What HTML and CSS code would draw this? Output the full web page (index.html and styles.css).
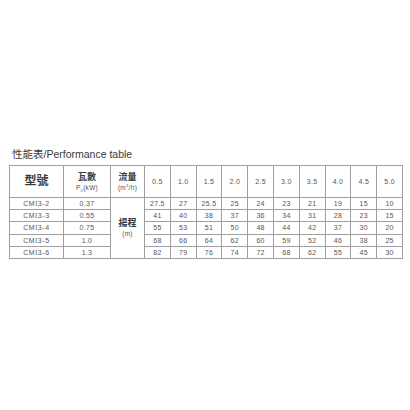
FILE: index.html
```html
<!DOCTYPE html>
<html lang="zh-Hant">
<head>
<meta charset="utf-8">
<title>Performance table</title>
<link rel="stylesheet" href="styles.css">
</head>
<body>
<main class="page">
  <h2 class="title">性能表/Performance table</h2>
  <table class="perf">
    <colgroup>
      <col class="c-model"><col class="c-power"><col class="c-head">
      <col class="c-q"><col class="c-q"><col class="c-q"><col class="c-q"><col class="c-q">
      <col class="c-q"><col class="c-q"><col class="c-q"><col class="c-q"><col class="c-q">
    </colgroup>
    <thead>
      <tr class="hrow">
        <th class="big">型號</th>
        <th><span class="zh">瓦數</span><span class="unit">P<sub>2</sub>(kW)</span></th>
        <th><span class="zh">流量</span><span class="unit">(m<sup>3</sup>/h)</span></th>
        <td>0.5</td><td>1.0</td><td>1.5</td><td>2.0</td><td>2.5</td>
        <td>3.0</td><td>3.5</td><td>4.0</td><td>4.5</td><td>5.0</td>
      </tr>
    </thead>
    <tbody>
      <tr>
        <td class="model">CMI3-2</td><td>0.37</td>
        <th rowspan="5"><span class="zh">揚程</span><span class="unit">(m)</span></th>
        <td>27.5</td><td>27</td><td>25.5</td><td>25</td><td>24</td><td>23</td><td>21</td><td>19</td><td>15</td><td>10</td>
      </tr>
      <tr>
        <td class="model">CMI3-3</td><td>0.55</td>
        <td>41</td><td>40</td><td>38</td><td>37</td><td>36</td><td>34</td><td>31</td><td>28</td><td>23</td><td>15</td>
      </tr>
      <tr>
        <td class="model">CMI3-4</td><td>0.75</td>
        <td>55</td><td>53</td><td>51</td><td>50</td><td>48</td><td>44</td><td>42</td><td>37</td><td>30</td><td>20</td>
      </tr>
      <tr>
        <td class="model">CMI3-5</td><td>1.0</td>
        <td>68</td><td>66</td><td>64</td><td>62</td><td>60</td><td>59</td><td>52</td><td>46</td><td>38</td><td>25</td>
      </tr>
      <tr>
        <td class="model">CMI3-6</td><td>1.3</td>
        <td>82</td><td>79</td><td>76</td><td>74</td><td>72</td><td>68</td><td>62</td><td>55</td><td>45</td><td>30</td>
      </tr>
    </tbody>
  </table>
</main>
</body>
</html>
```
FILE: styles.css
```css
html, body {
  margin: 0;
  padding: 0;
  background: #ffffff;
}
body {
  font-family: "Liberation Sans", "Noto Sans CJK TC", sans-serif;
  color: #444;
}
.page {
  padding: 147px 8px 0 9px;
}
.title {
  margin: 0 0 4px 3px;
  font-size: 10.5px;
  line-height: 14px;
  font-weight: normal;
  color: #3a3a3a;
}
.perf {
  width: 393px;
  table-layout: fixed;
  border-collapse: collapse;
  font-size: 7px;
  letter-spacing: 0.3px;
}
.c-model { width: 54px; }
.c-power { width: 47px; }
.c-head { width: 34px; }
.c-q { width: 25.8px; }
.perf th, .perf td {
  border: 1px solid #a0a0a0;
  padding: 0;
  text-align: center;
  vertical-align: middle;
  font-weight: normal;
  color: #555;
  line-height: 9px;
}
.perf tbody tr { height: 12.2px; }
.perf .hrow { height: 32px; }
.perf .big {
  font-size: 12px;
  font-weight: bold;
  color: #3a3a3a;
  letter-spacing: 0;
}
.zh {
  display: block;
  font-size: 9px;
  line-height: 12px;
  font-weight: bold;
  color: #3a3a3a;
  letter-spacing: 0;
}
.unit {
  display: block;
  font-size: 6.5px;
  line-height: 9px;
}
.unit sub, .unit sup {
  font-size: 4px;
  line-height: 0;
}
.model {
  letter-spacing: 0.6px;
}
```
